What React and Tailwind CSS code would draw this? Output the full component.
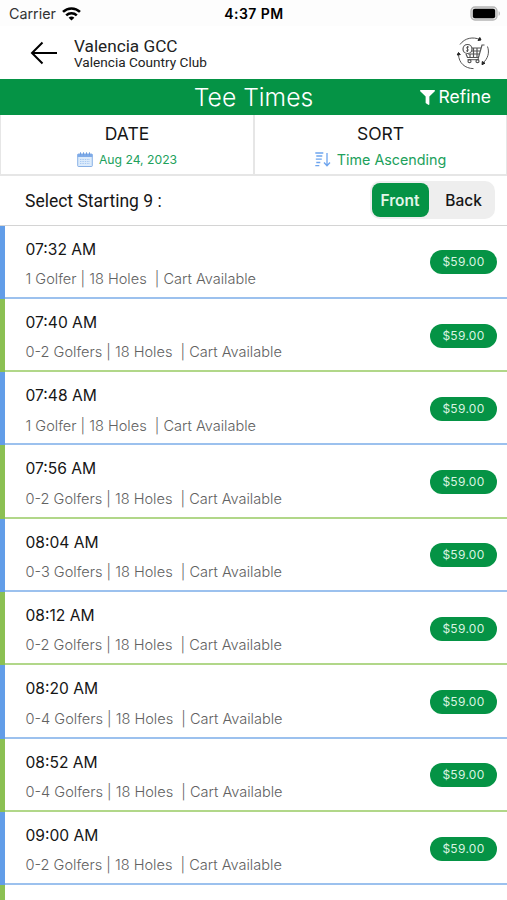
import { FaFilter } from "react-icons/fa";

const teeTimes = [
  { time: "07:32 AM", golfers: "1 Golfer" },
  { time: "07:40 AM", golfers: "0-2 Golfers" },
  { time: "07:48 AM", golfers: "1 Golfer" },
  { time: "07:56 AM", golfers: "0-2 Golfers" },
  { time: "08:04 AM", golfers: "0-3 Golfers" },
  { time: "08:12 AM", golfers: "0-2 Golfers" },
  { time: "08:20 AM", golfers: "0-4 Golfers" },
  { time: "08:52 AM", golfers: "0-4 Golfers" },
  { time: "09:00 AM", golfers: "0-2 Golfers" },
];

function WifiIcon() {
  return (
    <svg width="19" height="14" viewBox="0 0 19 14" fill="none" stroke="#000" strokeWidth="2.6">
      <path d="M1 4.900C5.800 .3 13.200 .3 18 4.900" />
      <path d="M4.200 8.400c3-2.800 7.600-2.800 10.600 0" />
      <path d="M9.500 13.600 6.600 10.700c1.700-1.500 4.100-1.500 5.800 0z" fill="#000" stroke="none" />
    </svg>
  );
}

function BatteryIcon() {
  return (
    <svg width="31" height="15" viewBox="0 0 31 15">
      <rect x="1" y="1" width="26" height="13" rx="4" fill="#e6e6e6" stroke="#b5b5b5" strokeWidth="1.300" />
      <rect x="2.800" y="2.800" width="22.400" height="9.400" rx="2" fill="#000" />
      <path d="M28.600 5.200c1.700.5 1.700 4.100 0 4.600z" fill="#b5b5b5" />
    </svg>
  );
}

function CartIcon() {
  return (
    <svg width="34" height="34" viewBox="0 0 34 34" fill="none" stroke="#555" strokeWidth="1">
      <path d="M4 8.500C9 1.700 17 .6 24 3.500" />
      <path d="M22 4.500 25 4 23.800 1.500z" fill="#222" stroke="#222" />
      <path d="M31.500 10.500c2.200 6 .5 12-4.500 16.500" />
      <path d="M26.300 25.500 26 28.700 29 27.200z" fill="#222" stroke="#222" />
      <path d="M17.500 32.600C9 32.500 2.800 27 2.500 18.500" />
      <path d="M1.200 19 2.500 16.500 4.300 18.500z" fill="#222" stroke="#222" />
      <path
        d="M28.500 9H26l-3.500 12.500H11.500L10 18M15 12h10M14.500 15h9.500M12 18h11.500M17.500 12v9M21 12v9M14 18v3.500"
        strokeWidth="1.200"
      />
      <path d="M22 21.500l.5 2.200H11.500" />
      <circle cx="13.500" cy="25.200" r="1.500" strokeWidth="1.200" />
      <circle cx="21.500" cy="25.200" r="1.500" strokeWidth="1.200" />
      <circle cx="11.500" cy="13" r="4.500" fill="#fff" strokeWidth="1.200" />
      <path d="M13 11.200c-2-1.100-3.300.8-1.500 1.700s.4 2.800-1.500 1.800M11.500 10v6" />
    </svg>
  );
}

function CalendarIcon() {
  return (
    <svg width="16" height="15" viewBox="0 0 16 15" fill="none" stroke="#6f9fe0">
      <rect x=".7" y="2" width="14.600" height="12.500" rx=".8" fill="#dcebfb" strokeWidth=".8" />
      <path d="M.6 2h14.800v3H.6z" fill="#7fabe8" stroke="none" />
      <path d="M3.500 .3v3M6.500 .3v3M9.500 .3v3M12.500 .3v3" strokeWidth="1" />
      <path d="M3 7.500h10M3 9.500h10M3 11.500h10" stroke="#a9caf3" strokeDasharray="1.400 1" />
    </svg>
  );
}

function SortIcon() {
  return (
    <svg width="16" height="15" viewBox="0 0 16 15" fill="none" stroke="#6ea5ee" strokeWidth="1.300">
      <path d="M.3 1h8M1.300 4h6M.8 7.200h6M1.300 10.500h4M.3 13.700h4" />
      <path d="M12 1v12.500M9 10.500l3 3.200 3-3.200" />
    </svg>
  );
}

function TeeTimeRow({ tee, blue }) {
  return (
    <div
      className={`flex h-[73.3px] shrink-0 border-l-[5px] ${
        blue ? "border-l-[#629de8]" : "border-l-[#8bc053]"
      }`}
    >
      <div
        className={`flex flex-1 items-start justify-between border-b-2 pr-[10px] pl-[20.500px] ${
          blue ? "border-b-[#9cc1ee]" : "border-b-[#b1d789]"
        }`}
      >
        <div className="pt-[14px]">
          <div className="text-[15.600px] leading-5 whitespace-pre text-[#161616]">{tee.time}</div>
          <div className="mt-[9.500px] text-[14.550px] leading-5 font-light whitespace-pre text-[#626262]">
            {`${tee.golfers} | 18 Holes  | Cart Available`}
          </div>
        </div>
        <div className="mt-[24.800px] flex h-[24px] w-[67px] items-center justify-center rounded-full bg-[#059345] text-[12px] tracking-[0.3px] text-[#d9f3e2]">
          $59.00
        </div>
      </div>
    </div>
  );
}

export default function App() {
  return (
    <div className="flex h-[900px] w-full flex-col overflow-hidden bg-white font-['Inter',sans-serif] text-[#161616]">
      <div className="grid h-[26px] shrink-0 grid-cols-3 items-center bg-[#fdfdfd] pt-px pr-[6px] pl-[9px]">
        <div className="flex items-center gap-[6px] text-[14.300px] text-[#333]">
          Carrier
          <WifiIcon />
        </div>
        <div className="pr-[2px] text-center text-[14px] font-semibold tracking-[0.45px] text-black">4:37 PM</div>
        <div className="flex justify-end">
          <BatteryIcon />
        </div>
      </div>

      <header className="flex h-[53px] shrink-0 items-center pr-[17px] pl-[30px]">
        <svg width="28" height="24" viewBox="0 0 28 24" fill="none" stroke="#000" strokeWidth="2">
          <path d="M27 12H2M12.500 1.500 2 12l10.500 10.500" />
        </svg>
        <div className="ml-4 flex-1 pt-[2px] font-['Roboto',sans-serif] text-[#222]">
          <div className="text-[17.200px] leading-[17px]">Valencia GCC</div>
          <div className="text-[13.600px] leading-[15px]">Valencia Country Club</div>
        </div>
        <CartIcon />
      </header>

      <div className="grid h-9 shrink-0 grid-cols-[1fr_auto_1fr] items-center bg-[#059345] pr-4 pl-4 text-white">
        <div />
        <div className="text-[24.700px] font-light">Tee Times</div>
        <div className="flex items-center justify-end gap-[4px] text-[17.500px]">
          <FaFilter size={15} />
          <span>Refine</span>
        </div>
      </div>

      <div className="grid h-[61px] shrink-0 grid-cols-[255px_1fr] border-b-2 border-[#e6e6e6]">
        <div className="border-r-2 border-l border-[#e6e6e6] pt-[8px] text-center">
          <div className="text-[17.500px] leading-[22px]">DATE</div>
          <div className="mt-[4px] flex items-center justify-center gap-[6px] text-[12.200px] leading-5 text-[#21a15c]">
            <CalendarIcon />
            <span className="pt-px">Aug 24, 2023</span>
          </div>
        </div>
        <div className="border-r border-[#e6e6e6] pt-[8px] text-center">
          <div className="text-[17.500px] leading-[22px]">SORT</div>
          <div className="mt-[4px] flex items-center justify-center gap-[6px] text-[14.300px] leading-5 text-[#21a15c]">
            <SortIcon />
            <span className="pt-px">Time Ascending</span>
          </div>
        </div>
      </div>

      <div className="flex h-[49.500px] shrink-0 items-center justify-between border-b border-[#d4d4d4] pr-[12.500px] pl-[25px]">
        <div className="pt-px font-['Roboto',sans-serif] text-[17.500px]">Select Starting 9 :</div>
        <div className="flex h-[38px] w-[125px] items-center rounded-[10px] bg-[#eeeeee] pl-[2px] text-[15.500px] font-medium">
          <div className="flex h-[34px] w-[57px] items-center justify-center rounded-[8px] bg-[#059345] pt-px font-semibold text-[#e2f6e9]">
            Front
          </div>
          <div className="flex-1 pt-px pl-1 text-center">Back</div>
        </div>
      </div>

      <div className="flex flex-col">
        {teeTimes.map((tee, i) => (
          <TeeTimeRow key={tee.time} tee={tee} blue={i % 2 === 0} />
        ))}
        <div className="h-4 border-l-[5px] border-l-[#8bc053]" />
      </div>
    </div>
  );
}
